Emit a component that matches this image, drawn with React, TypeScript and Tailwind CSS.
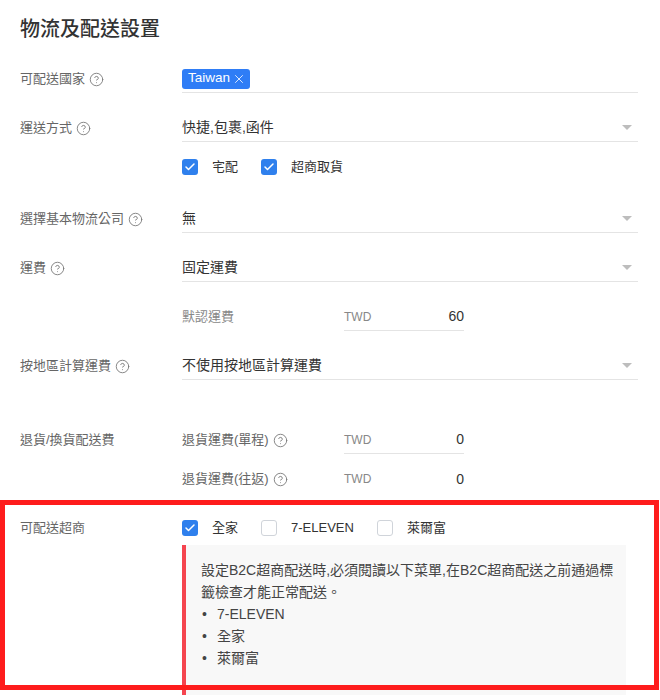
import { Check, X, CircleHelp } from 'lucide-react';

const FONT = { fontFamily: '"Liberation Sans", "Noto Sans CJK TC", sans-serif' };

function Help() {
  return <CircleHelp className="ml-[4px] h-[15px] w-[15px] text-[#777]" strokeWidth={1.4} />;
}

function Caret() {
  return (
    <svg width="10" height="5" viewBox="0 0 10 5" className="mr-[6px]">
      <path d="M0 0 H10 L5 5 Z" fill="#bdbdbd" />
    </svg>
  );
}

function Label({ text, help }: { text: string; help?: boolean }) {
  return (
    <div className="flex h-[28px] w-[162px] shrink-0 items-center text-[13px] text-[#666]">
      {text}
      {help && <Help />}
    </div>
  );
}

function SelectRow({ label, value, className }: { label: string; value: string; className: string }) {
  return (
    <div className={`flex ${className}`}>
      <Label text={label} help />
      <div className="flex h-[28px] flex-1 items-center justify-between border-b border-[#e4e4e4] text-[14px] text-[#333]">
        <span>{value}</span>
        <Caret />
      </div>
    </div>
  );
}

function Box({ checked, label, last }: { checked: boolean; label: string; last?: boolean }) {
  return (
    <div className={`flex items-center ${last ? '' : 'mr-[23px]'}`}>
      {checked ? (
        <span className="flex h-[16px] w-[16px] items-center justify-center rounded-[3px] bg-[#2f80ed]">
          <Check className="h-[12px] w-[12px] text-white" strokeWidth={3} />
        </span>
      ) : (
        <span className="h-[16px] w-[16px] rounded-[3px] border border-[#d0d4da] bg-white" />
      )}
      <span className="ml-[14px] text-[13px] text-[#333]">{label}</span>
    </div>
  );
}

function Money({ value, underline = true }: { value: string; underline?: boolean }) {
  return (
    <div
      className={`flex h-[28px] w-[120px] items-center justify-between ${
        underline ? 'border-b border-[#e4e4e4]' : ''
      }`}
    >
      <span className="text-[12px] text-[#888]">TWD</span>
      <span className="text-[14px] text-[#333]">{value}</span>
    </div>
  );
}

export default function App() {
  return (
    <div className="relative min-h-[700px] w-[660px] overflow-hidden bg-white pl-[20px] pr-[22px]" style={FONT}>
      <h1 className="pt-[15px] text-[20px] font-medium leading-[28px] text-[#333]">物流及配送設置</h1>

      {/* 可配送國家 */}
      <div className="mt-[22px] flex">
        <Label text="可配送國家" help />
        <div className="flex h-[28px] flex-1 items-center border-b border-[#e4e4e4]">
          <span className="flex h-[20px] items-center rounded-[3px] bg-[#2f7df6] pl-[6px] pr-[4px] text-[13.5px] text-white">
            Taiwan
            <X className="ml-[2px] h-[14px] w-[14px]" strokeWidth={1.4} />
          </span>
        </div>
      </div>

      <SelectRow className="mt-[21px]" label="運送方式" value="快捷,包裹,函件" />

      <div className="mt-[14px] flex h-[22px] items-center pl-[162px]">
        <Box checked label="宅配" />
        <Box checked label="超商取貨" last />
      </div>

      <SelectRow className="mt-[27px]" label="選擇基本物流公司" value="無" />
      <SelectRow className="mt-[21px]" label="運費" value="固定運費" />

      {/* 默認運費 */}
      <div className="mt-[21px] flex pl-[162px]">
        <div className="flex h-[28px] w-[162px] items-center text-[13px] text-[#888]">默認運費</div>
        <Money value="60" />
      </div>

      <SelectRow className="mt-[21px]" label="按地區計算運費" value="不使用按地區計算運費" />

      {/* 退貨/換貨配送費 */}
      <div className="mt-[46px] flex">
        <Label text="退貨/換貨配送費" />
        <Label text="退貨運費(單程)" help />
        <Money value="0" />
      </div>
      <div className="mt-[11px] flex pl-[162px]">
        <Label text="退貨運費(往返)" help />
        <Money value="0" underline={false} />
      </div>

      {/* 可配送超商 */}
      <div className="mt-[24px] flex h-[22px] items-center">
        <div className="w-[162px] text-[13px] text-[#666]">可配送超商</div>
        <Box checked label="全家" />
        <Box checked={false} label="7-ELEVEN" />
        <Box checked={false} label="萊爾富" last />
      </div>

      <div className="ml-[162px] mr-[12px] mt-[6px] border-l-[4px] border-[#f5454f] bg-[#f8f8f8] pb-[26px] pl-[15px] pr-[10px] pt-[14px] text-[14px] leading-[22px] text-[#444]">
        <p>設定B2C超商配送時,必須閱讀以下菜單,在B2C超商配送之前通過標籤檢查才能正常配送。</p>
        <ul>
          {['7-ELEVEN', '全家', '萊爾富'].map((s) => (
            <li key={s} className="flex">
              <span className="w-[16px] pl-[1px]">•</span>
              {s}
            </li>
          ))}
        </ul>
      </div>

      {/* annotation frame */}
      <div className="pointer-events-none absolute left-0 top-[500px] h-[190px] w-[659px] border-[5px] border-[#fe1c1c]" />
    </div>
  );
}
